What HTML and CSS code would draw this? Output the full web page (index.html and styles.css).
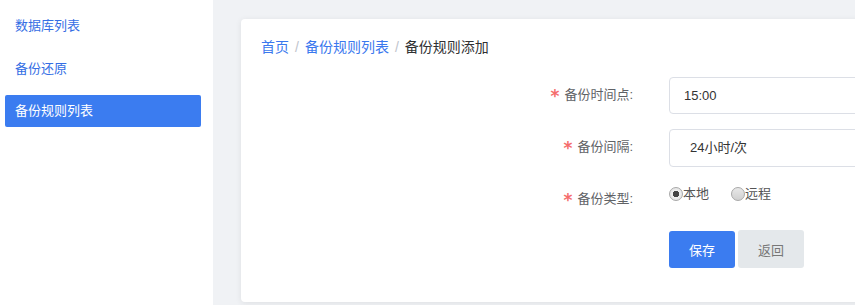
FILE: index.html
```html
<!doctype html>
<html lang="zh-CN">
  <head>
    <meta charset="UTF-8" />
    <meta name="viewport" content="width=device-width, initial-scale=1.0" />
    <title>备份规则添加</title>
    <link rel="stylesheet" href="styles.css">
  </head>
  <body>
    <div class="sidebar">
      <a class="menu-item" href="#">数据库列表</a>
      <a class="menu-item" href="#">备份还原</a>
      <a class="menu-item active" href="#">备份规则列表</a>
    </div>

    <div class="main">
      <div class="card">
        <div class="breadcrumb">
          <a href="#">首页</a><span class="sep">/</span><a href="#">备份规则列表</a><span class="sep">/</span><span class="current">备份规则添加</span>
        </div>

        <form class="form">
          <div class="form-item">
            <label class="form-label"><span class="required">*</span>备份时间点:</label>
            <div class="form-control">
              <input class="input" type="text" value="15:00" />
            </div>
          </div>

          <div class="form-item">
            <label class="form-label"><span class="required">*</span>备份间隔:</label>
            <div class="form-control">
              <div class="input select">24小时/次</div>
            </div>
          </div>

          <div class="form-item radios">
            <label class="form-label"><span class="required">*</span>备份类型:</label>
            <div class="form-control">
              <label class="radio"><span class="radio-dot checked"></span>本地</label>
              <label class="radio"><span class="radio-dot"></span>远程</label>
            </div>
          </div>

          <div class="actions">
            <button class="btn btn-primary" type="button">保存</button>
            <button class="btn btn-default" type="button">返回</button>
          </div>
        </form>
      </div>
    </div>
  </body>
</html>
```

FILE: styles.css
```css
:root {
  font-family: "Liberation Sans", "Noto Sans CJK SC", sans-serif;
  font-size: 13px;
  color: #606266;
  background-color: #f0f2f5;
}

body {
  margin: 0;
  height: 305px;
  display: flex;
  overflow: hidden;
}

a {
  text-decoration: none;
}

.sidebar {
  width: 213px;
  flex-shrink: 0;
  background: white;
  padding-top: 10px;
  display: flex;
  flex-direction: column;
  gap: 10.5px;
  box-sizing: border-box;
}

.menu-item {
  display: block;
  margin: 0 12px 0 5px;
  height: 32px;
  line-height: 32px;
  padding-left: 10px;
  border-radius: 2px;
  color: #356ee4;
  font-size: 13px;
}

.menu-item.active {
  background: #3b7cf0;
  color: white;
}

.main {
  flex: 1;
  padding: 19px 0 0 28px;
  overflow: hidden;
}

.card {
  width: 900px;
  height: 283px;
  background: white;
  border-radius: 4px;
  box-shadow: 0 1px 6px rgba(0, 0, 0, 0.08);
  padding: 18px 20px 0;
  box-sizing: border-box;
}

.breadcrumb {
  font-size: 14px;
  line-height: 20px;
  color: #303133;
}

.breadcrumb a {
  color: #3a78ee;
}

.breadcrumb .sep {
  color: #c0c4cc;
  margin: 0 6px;
}

.form {
  margin-top: 20px;
}

.form-item {
  display: flex;
  height: 38px;
  margin-bottom: 14px;
}

.form-item.radios {
  height: 37px;
  margin-bottom: 13px;
}

.form-label {
  width: 372px;
  padding-right: 36px;
  text-align: right;
  line-height: 38px;
  color: #606266;
  flex-shrink: 0;
}

.form-item:first-child .form-label {
  line-height: 35px;
}

.form-item:nth-child(2) .form-label {
  line-height: 36px;
}

.form-item.radios .form-label {
  line-height: 36px;
}

.required {
  color: #f56c6c;
  font-family: "DejaVu Sans", sans-serif;
  font-size: 17px;
  font-weight: bold;
  margin-right: 5px;
  vertical-align: -3px;
}

.form-control {
  flex: 1;
}

.input {
  width: 300px;
  height: 37px;
  box-sizing: border-box;
  border: 1px solid #dcdfe6;
  border-radius: 4px;
  padding: 0 14px;
  font: inherit;
  font-size: 13px;
  color: #333;
  line-height: 35px;
  outline: none;
}

.select {
  height: 38px;
  padding-left: 20px;
  line-height: 36px;
}

.radios .form-control {
  display: flex;
  align-items: flex-start;
  padding-top: 3px;
  gap: 22px;
}

.radio {
  display: flex;
  align-items: center;
  color: #555;
  line-height: 20px;
}

.radio-dot {
  width: 12px;
  height: 12px;
  border-radius: 50%;
  border: 1px solid #a8a8a8;
  background: linear-gradient(#e8e8e8, #d0d0d0);
  margin-right: 0;
}

.radio-dot.checked {
  background: radial-gradient(circle, #444 0, #444 3px, #eee 3.5px, #ddd 100%);
}

.actions {
  display: flex;
  gap: 3px;
  padding-left: 408px;
}

.btn {
  width: 66px;
  height: 37px;
  border: none;
  border-radius: 3px;
  font: inherit;
  font-size: 13px;
  cursor: pointer;
}

.btn-primary {
  background: #3b7cf0;
  color: white;
}

.btn-default {
  background: #e4e8eb;
  color: #777;
  height: 38px;
  margin-top: -1px;
}
```
